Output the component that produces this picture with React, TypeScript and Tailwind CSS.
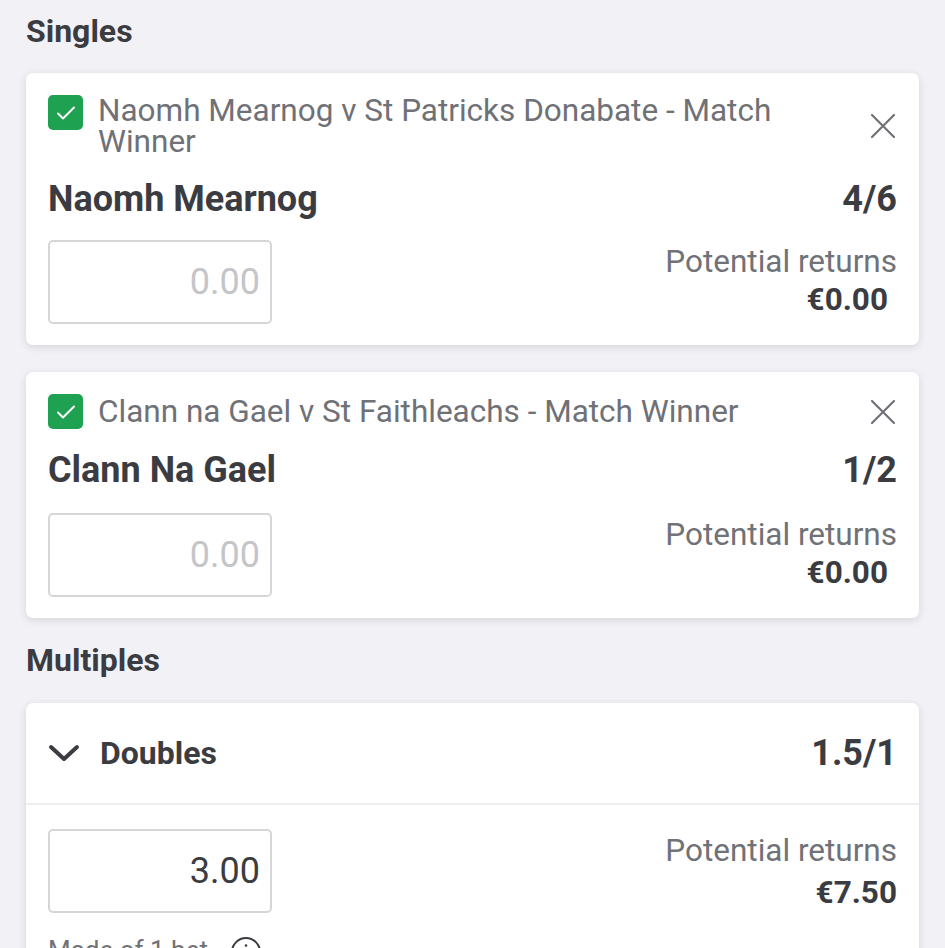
import React from "react";

function Check() {
  return (
    <div className="w-[35px] h-[35px] rounded-[5px] bg-[#1fa152] flex items-center justify-center shrink-0">
      <svg width="24" height="24" viewBox="0 0 24 24" fill="none" stroke="white" strokeWidth="2" strokeLinecap="round" strokeLinejoin="round">
        <path d="M4 12.5l5 5L20 6.5" />
      </svg>
    </div>
  );
}

function CloseX() {
  return (
    <svg width="28" height="28" viewBox="0 0 28 28" fill="none" stroke="#6f7176" strokeWidth="2.2" strokeLinecap="round">
      <path d="M3 3l22 22M25 3L3 25" />
    </svg>
  );
}

function Stake({ value, placeholder, ret, retPad }: { value?: string; placeholder?: string; ret: string; retPad?: boolean }) {
  return (
    <div className="flex justify-between items-start">
      <div className="w-[224px] h-[84px] border-2 border-[#d6d6d8] rounded-[5px] flex items-center justify-end pr-[10px]">
        {value ? (
          <span className="text-[36px] text-[#3b3c41]">{value}</span>
        ) : (
          <span className="text-[36px] text-[#c4c5c8]">{placeholder}</span>
        )}
      </div>
      <div className="flex flex-col items-end pt-[2px]">
        <span className="text-[31.5px] leading-[40px] text-[#707277]">Potential returns</span>
        <span className={"text-[31.5px] font-bold text-[#3b3c41] " + (retPad ? "leading-[36px] pr-[9px]" : "leading-[44px]")}>{ret}</span>
      </div>
    </div>
  );
}

export default function App() {
  return (
    <div className="w-[945px] h-[948px] overflow-hidden bg-[#f2f2f6] px-[26px]" style={{ fontFamily: "Roboto, 'Noto Sans', sans-serif" }}>
      <div className="pt-[11px] text-[32px] font-bold text-[#3b3c41] leading-[40px]">Singles</div>
      <div className="mt-[22px] flex flex-col gap-[27px]">
        <div className="bg-white rounded-[7px] shadow-[0_2px_8px_rgba(0,0,0,0.12)] px-[22px] pt-[22px] pb-[21px]">
          <div className="flex items-start">
            <Check />
            <div className="flex-1 pl-[15px] text-[31.5px] leading-[31px] text-[#6f7176] pr-[90px]">
              Naomh Mearnog v St Patricks Donabate - Match Winner
            </div>
            <div className="self-center"><CloseX /></div>
          </div>
          <div className="flex justify-between items-center mt-[20px] mb-[19px] leading-[44px]">
            <span className="text-[36px] font-bold text-[#3b3c41]">Naomh Mearnog</span>
            <span className="text-[36px] font-bold text-[#3b3c41]">4/6</span>
          </div>
          <Stake placeholder="0.00" ret="€0.00" retPad />
        </div>

        <div className="bg-white rounded-[7px] shadow-[0_2px_8px_rgba(0,0,0,0.12)] px-[22px] pt-[22px] pb-[21px]">
          <div className="flex items-center">
            <Check />
            <div className="flex-1 pl-[15px] text-[31.5px] leading-[31px] text-[#6f7176]">
              Clann na Gael v St Faithleachs - Match Winner
            </div>
            <CloseX />
          </div>
          <div className="flex justify-between items-center mt-[19px] mb-[21px] leading-[44px]">
            <span className="text-[36px] font-bold text-[#3b3c41]">Clann Na Gael</span>
            <span className="text-[36px] font-bold text-[#3b3c41]">1/2</span>
          </div>
          <Stake placeholder="0.00" ret="€0.00" retPad />
        </div>
      </div>

      <div className="mt-[22px] text-[32px] font-bold text-[#3b3c41] leading-[40px]">Multiples</div>

      <div className="mt-[23px] bg-white rounded-t-[7px] shadow-[0_2px_8px_rgba(0,0,0,0.12)]">
        <div className="flex items-center justify-between px-[22px] h-[102px] border-b-2 border-[#eeeef1]">
          <div className="flex items-center">
            <svg width="32" height="20" viewBox="0 0 32 20" fill="none" stroke="#3b3c41" strokeWidth="4" strokeLinecap="round" strokeLinejoin="round">
              <path d="M3 4l13 12L29 4" />
            </svg>
            <span className="ml-[20px] text-[32px] font-bold text-[#3b3c41]">Doubles</span>
          </div>
          <span className="text-[36px] font-bold text-[#3b3c41]">1.5/1</span>
        </div>
        <div className="px-[22px] pt-[24px] pb-[20px]">
          <Stake value="3.00" ret="€7.50" />
          <div className="flex items-center mt-[18px] h-[34px] text-[26px] leading-[34px] text-[#707277]">
            <span>Made of 1 bet</span>
            <svg className="ml-[22px] mt-[4px]" width="32" height="32" viewBox="0 0 32 32" fill="none" stroke="#3b3c41" strokeWidth="2">
              <circle cx="16" cy="16" r="14" />
              <path d="M16 14v9" strokeLinecap="round" />
              <circle cx="16" cy="9.5" r="1.3" fill="#3b3c41" stroke="none" />
            </svg>
          </div>
        </div>
      </div>
    </div>
  );
}
